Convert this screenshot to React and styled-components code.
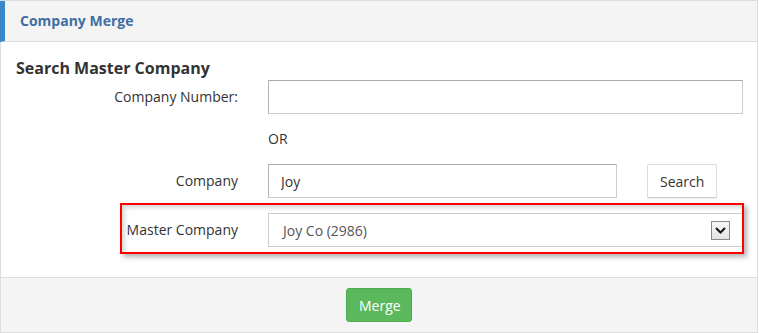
import React from 'react'
import styled, { createGlobalStyle } from 'styled-components'

const GlobalStyle = createGlobalStyle`
	html, body {
		margin: 0;
		padding: 0;
		background: #ffffff;
		font-family: 'Open Sans', 'Liberation Sans', sans-serif;
		font-size: 14px;
		color: #333333;
	}
	* {
		box-sizing: border-box;
	}
`

const Panel = styled.div`
	width: 758px;
	height: 333px;
	border: 1px solid #dddddd;
	display: flex;
	flex-direction: column;
	background: #ffffff;
`

const PanelHeader = styled.div`
	margin-left: -1px;
	height: 41px;
	padding: 10px 15px;
	border-left: 5px solid #3a87c9;
	border-bottom: 1px solid #dddddd;
	background: #f4f4f4;
	font-weight: 700;
	font-size: 14px;
	line-height: 20px;
	color: #3f6ea2;
`

const PanelBody = styled.div`
	flex: 1;
	padding: 15px 14px 15px 15px;
`

const Heading = styled.h4`
	margin: 0;
	font-size: 16px;
	line-height: 23px;
	font-weight: 700;
	color: #333333;
`

const FormRow = styled.div`
	position: relative;
	display: grid;
	grid-template-columns: 222px 1fr;
	column-gap: 30px;
	margin-bottom: 15px;
`

const Label = styled.label`
	text-align: right;
	line-height: 20px;
	padding-top: ${(p) => (p.$plain ? '0' : '7px')};
`

const Plain = styled.div`
	line-height: 20px;
`

const Inline = styled.div`
	display: flex;
	gap: 30px;
`

const Input = styled.input`
	width: ${(p) => p.$width || '100%'};
	height: 34px;
	padding: 6px 12px;
	border: 1px solid #cccccc;
	border-top-color: #a9a9a9;
	border-left-color: #b5b5b5;
	font-family: inherit;
	font-size: 14px;
	color: #333333;
	background: #ffffff;
	outline: none;
`

const Button = styled.button`
	height: 34px;
	padding: 0 12px;
	border: 1px solid #dddddd;
	border-bottom-color: #cccccc;
	border-radius: 2px;
	background: #ffffff;
	box-shadow: 0 1px 1px rgba(0, 0, 0, 0.08);
	font-family: inherit;
	font-size: 14px;
	color: #333333;
`

const MergeButton = styled(Button)`
	width: 66px;
	border: 1px solid #4cae4c;
	border-radius: 3px;
	background: #5cb85c;
	box-shadow: none;
	color: #ffffff;
`

const SelectBox = styled.div`
	height: 34px;
	display: flex;
	align-items: center;
	justify-content: space-between;
	padding: 0 12px 0 14px;
	border: 1px solid #cccccc;
	color: #555555;
	background: #ffffff;
`

const ArrowBox = styled.span`
	width: 19px;
	height: 19px;
	display: flex;
	align-items: center;
	justify-content: center;
	border: 1px solid #8a8a8a;
	background: linear-gradient(#f6f6f6, #e4e4e4);
`

// red annotation frame drawn over the master company row
const Highlight = styled.div`
	position: absolute;
	left: 104px;
	right: -1px;
	top: -10px;
	bottom: -7px;
	border: 2px solid #ff0000;
	box-shadow: 3px 3px 5px rgba(0, 0, 0, 0.3), inset 3px 3px 4px rgba(0, 0, 0, 0.15);
	pointer-events: none;
`

const PanelFooter = styled.div`
	height: 55px;
	padding: 10px 0;
	border-top: 1px solid #dddddd;
	background: #f4f4f4;
	display: flex;
	justify-content: center;
`

export default function App() {
	return (
		<>
			<GlobalStyle />
			<Panel>
				<PanelHeader>Company Merge</PanelHeader>
				<PanelBody>
					<Heading>Search Master Company</Heading>
					<FormRow>
						<Label>Company Number:</Label>
						<Input type="text" defaultValue="" />
					</FormRow>
					<FormRow>
						<Label $plain />
						<Plain>OR</Plain>
					</FormRow>
					<FormRow>
						<Label>Company</Label>
						<Inline>
							<Input type="text" defaultValue="Joy" $width="349px" />
							<Button>Search</Button>
						</Inline>
					</FormRow>
					<FormRow>
						<Label>Master Company</Label>
						<SelectBox>
							<span>Joy Co (2986)</span>
							<ArrowBox>
								<svg width="11" height="7" viewBox="0 0 11 7">
									<polyline points="1,1 5.5,5.5 10,1" fill="none" stroke="#111" strokeWidth="2" />
								</svg>
							</ArrowBox>
						</SelectBox>
						<Highlight />
					</FormRow>
				</PanelBody>
				<PanelFooter>
					<MergeButton>Merge</MergeButton>
				</PanelFooter>
			</Panel>
		</>
	)
}
